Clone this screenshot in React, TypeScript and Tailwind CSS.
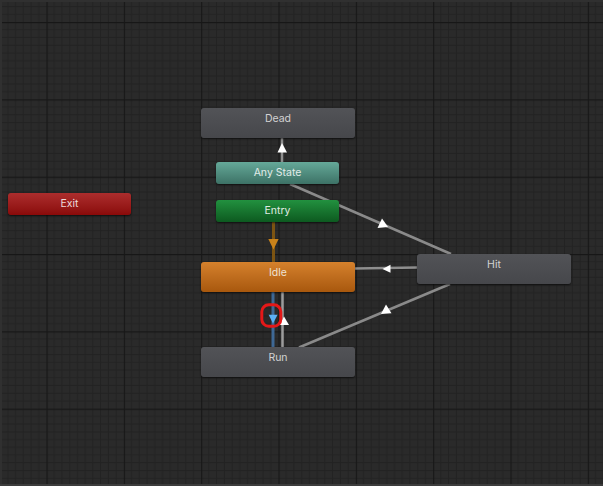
import React from "react";

const MAJOR = 77.33;
const MINOR = MAJOR / 10;

function Grid() {
  const minors = Array.from({ length: 9 }, (_, i) => (i + 1) * MINOR);
  return (
    <svg className="absolute inset-0" width={603} height={486}>
      <defs>
        <pattern id="g" patternUnits="userSpaceOnUse" x={46.5} y={22} width={MAJOR} height={MAJOR}>
          {minors.map((m) => (
            <React.Fragment key={m}>
              <line x1={m} y1={0} x2={m} y2={MAJOR} stroke="#222222" strokeWidth={1} />
              <line x1={0} y1={m} x2={MAJOR} y2={m} stroke="#222222" strokeWidth={1} />
            </React.Fragment>
          ))}
          <line x1={0.5} y1={0} x2={0.5} y2={MAJOR} stroke="#171717" strokeWidth={1.3} />
          <line x1={0} y1={0.5} x2={MAJOR} y2={0.5} stroke="#171717" strokeWidth={1.3} />
        </pattern>
      </defs>
      <rect width={603} height={486} fill="#2a2a2a" />
      <rect width={603} height={486} fill="url(#g)" />
      <rect x={0} y={0} width={603} height={2} fill="#303030" />
      <rect x={0} y={0} width={2} height={486} fill="#303030" />
      <rect x={0} y={484} width={603} height={2} fill="#3c3c3c" />
    </svg>
  );
}

function Transitions() {
  return (
    <svg className="absolute inset-0" width={603} height={486}>
      {/* Any State -> Dead */}
      <line x1={282} y1={162} x2={282} y2={138} stroke="#8e8e8e" strokeWidth={2.5} />
      <polygon points="282,143 277.5,152.5 287,152.5" fill="#ffffff" />
      {/* Any State -> Hit */}
      <line x1={290} y1={184} x2={451} y2={254} stroke="#8a8a8a" strokeWidth={2.5} />
      <polygon points="382,218.5 377.5,228 388,227" fill="#ffffff" />
      {/* Hit -> Idle */}
      <line x1={355} y1={268.5} x2={417} y2={267.5} stroke="#8e8e8e" strokeWidth={2.5} />
      <polygon points="382.5,269 390.5,264.8 390.5,272.8" fill="#ffffff" />
      {/* Hit -> Run */}
      <line x1={450} y1={284} x2={299} y2={347.5} stroke="#8a8a8a" strokeWidth={2.5} />
      <polygon points="386,304.5 381,314 391.5,313.3" fill="#ffffff" />
      {/* Entry -> Idle */}
      <line x1={273.5} y1={222} x2={273.5} y2={262} stroke="#7c5412" strokeWidth={3} />
      <polygon points="268.3,239 278.6,239 273.5,249.5" fill="#c8821a" />
      {/* Idle -> Run */}
      <line x1={273} y1={292} x2={273} y2={347} stroke="#3e6895" strokeWidth={3} />
      <polygon points="268.6,314.8 277.6,314.8 273,323.5" fill="#5cb0f5" />
      {/* Run -> Idle */}
      <line x1={282.5} y1={347} x2={282.5} y2={292} stroke="#9c9c9c" strokeWidth={2.5} />
      <polygon points="284,316.5 279.5,325 289,325" fill="#ffffff" />
    </svg>
  );
}

function Annotation() {
  return (
    <svg className="absolute inset-0 pointer-events-none" width={603} height={486}>
      <rect x={261.8} y={304.8} width={19} height={21.5} rx={7} fill="none" stroke="#e41818" strokeWidth={3} />
    </svg>
  );
}

const label = "text-[10.5px] leading-[14px] text-center";

export default function App() {
  return (
    <div
      className="relative w-[603px] h-[486px] overflow-hidden bg-[#2a2a2a]"
      style={{ fontFamily: "Inter, 'Liberation Sans', Arial, sans-serif" }}
    >
      <Grid />
      <Transitions />

      {/* Dead */}
      <div className={`absolute left-[201px] top-[108px] w-[154px] h-[30px] rounded-[3px] bg-linear-to-b from-[#525357] to-[#46474b] shadow-[0_1px_2px_rgba(0,0,0,0.6)] pt-[4px] ${label} text-[#d2d2d2]`}>
        Dead
      </div>

      {/* Any State */}
      <div className={`absolute left-[216px] top-[162px] w-[123px] h-[22px] rounded-[3px] bg-linear-to-b from-[#65a999] to-[#3d7266] shadow-[0_1px_2px_rgba(0,0,0,0.6)] flex items-center justify-center ${label} text-[#e2ece9]`}>
        Any State
      </div>

      {/* Entry */}
      <div className={`absolute left-[216px] top-[200px] w-[123px] h-[22px] rounded-[3px] bg-linear-to-b from-[#22913f] to-[#0d5a20] shadow-[0_1px_2px_rgba(0,0,0,0.6)] flex items-center justify-center ${label} text-[#e0ece3]`}>
        Entry
      </div>

      {/* Exit */}
      <div className={`absolute left-[8px] top-[193px] w-[123px] h-[22px] rounded-[3px] bg-linear-to-b from-[#ac2d2d] to-[#8a0909] shadow-[0_1px_2px_rgba(0,0,0,0.6)] flex items-center justify-center ${label} text-[#ecdada]`}>
        Exit
      </div>

      {/* Idle */}
      <div className={`absolute left-[201px] top-[262px] w-[154px] h-[30px] rounded-[3px] bg-linear-to-b from-[#d5812c] to-[#a8580d] shadow-[0_1px_2px_rgba(0,0,0,0.6)] pt-[4px] ${label} text-[#efe2d4]`}>
        Idle
      </div>

      {/* Run */}
      <div className={`absolute left-[201px] top-[347px] w-[154px] h-[30px] rounded-[3px] bg-linear-to-b from-[#525357] to-[#46474b] shadow-[0_1px_2px_rgba(0,0,0,0.6)] pt-[4px] ${label} text-[#d2d2d2]`}>
        Run
      </div>

      {/* Hit */}
      <div className={`absolute left-[417px] top-[254px] w-[154px] h-[30px] rounded-[3px] bg-linear-to-b from-[#525357] to-[#46474b] shadow-[0_1px_2px_rgba(0,0,0,0.6)] pt-[4px] ${label} text-[#d2d2d2]`}>
        Hit
      </div>

      <Annotation />
    </div>
  );
}
